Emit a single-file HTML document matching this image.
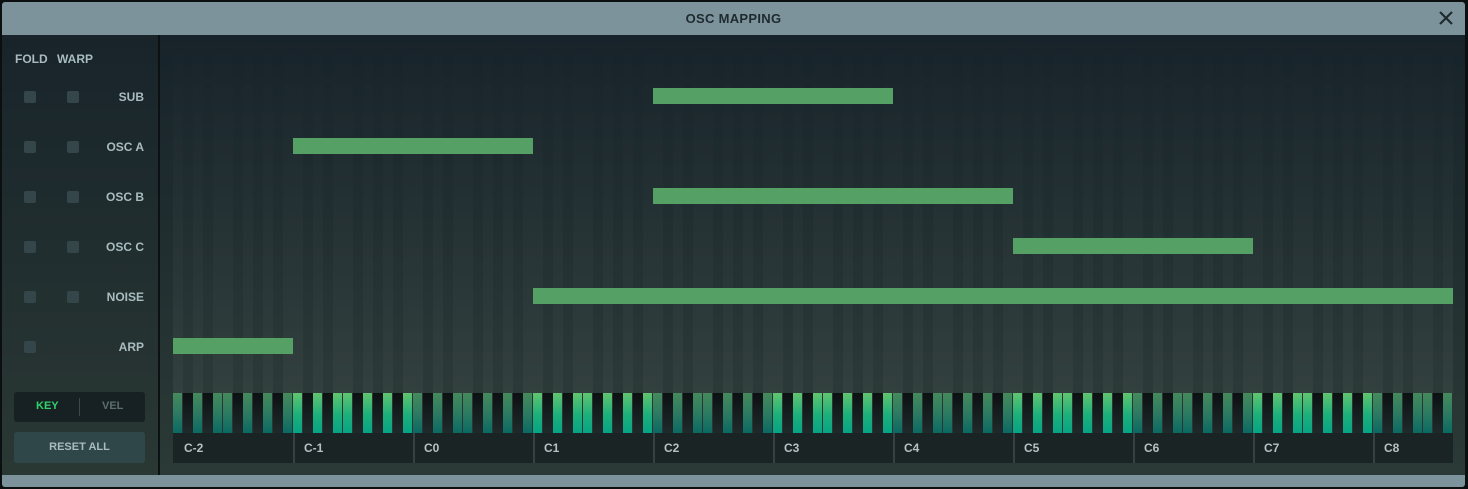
<!DOCTYPE html><html><head><style>
*{margin:0;padding:0;box-sizing:border-box}
body{width:1468px;height:489px;background:#0b0f10;font-family:"Liberation Sans",sans-serif;font-weight:bold;overflow:hidden;position:relative}
.win{position:absolute;left:2px;top:2px;width:1463px;height:485px;background:#1b272a;border-radius:3px;overflow:hidden}
.title{position:absolute;left:0;top:0;width:100%;height:33px;background:#7d939c;color:#1d2a2e;font-size:13px;text-align:center;line-height:33px;letter-spacing:.3px}
.x{position:absolute;right:10px;top:7px}
.bot{position:absolute;left:0;bottom:0;width:100%;height:12px;background:#7d939c}
.left{position:absolute;left:0;top:33px;width:156px;height:440px;background:linear-gradient(#18242a,#2a3834)}
.div{position:absolute;left:156px;top:33px;width:2px;height:440px;background:#0c1213}
.main{position:absolute;left:158px;top:33px;width:1305px;height:440px;background:linear-gradient(#17232a,#2b3a36)}
.lbl{position:absolute;color:#a9bcc0;font-size:12px}
.cb{position:absolute;width:12px;height:12px;background:#34464a;border-radius:2px}
.bar{position:absolute;height:16px;background:#55a065}
.k{position:absolute;top:358px;width:10px;height:40px}
.col{position:absolute;top:0;width:10px;height:358px}
.strip{position:absolute;left:13px;top:398px;width:1280px;height:30px;background:#1b2425}
.nl{position:absolute;top:398px;height:30px;line-height:30px;color:#b5c2c4;font-size:12px;padding-left:9px;border-left:2px solid #344244}
</style></head><body><div class="win">
<div class="title">OSC MAPPING<svg class="x" width="18" height="18" viewBox="0 0 18 18"><path d="M3 3L15 15M15 3L3 15" stroke="#1d2a2e" stroke-width="2.2"/></svg></div>
<div class="left">
<div class="lbl" style="left:13px;top:17px">FOLD</div><div class="lbl" style="left:55px;top:17px">WARP</div>
<div id="rows"></div>
<div style="position:absolute;left:12px;top:357px;width:131px;height:30px;background:#172022;border-radius:3px">
<span style="position:absolute;left:22px;top:8px;color:#2fd36b;font-size:11px">KEY</span>
<span style="position:absolute;left:65px;top:6px;width:1px;height:18px;background:#3a4a4c"></span>
<span style="position:absolute;left:88px;top:8px;color:#5c6e70;font-size:11px">VEL</span></div>
<div style="position:absolute;left:12px;top:397px;width:131px;height:31px;background:#30474a;border-radius:3px;color:#a9bcc0;font-size:11px;text-align:center;line-height:31px">RESET ALL</div>
</div>
<div class="div"></div>
<div class="main" id="m"><div class="strip"></div></div>
<div class="bot"></div>
</div>
<script>
var names=["SUB","OSC A","OSC B","OSC C","NOISE","ARP"],r=document.getElementById('rows'),h='';
names.forEach(function(n,i){var y=62+i*50;h+='<div class="cb" style="left:22px;top:'+(y-6)+'px"></div>';if(i<5)h+='<div class="cb" style="left:65px;top:'+(y-6)+'px"></div>';h+='<div class="lbl" style="right:14px;top:'+(y-7)+'px">'+n+'</div>';});
r.innerHTML=h;
var m=document.getElementById('m'),s='';var blk=[0,1,0,1,0,0,1,0,1,0,1,0];
for(var i=0;i<128;i++){var x=13+i*10,o=Math.floor(i/12),b=blk[i%12],br=o%2==1;
s+='<div class="col" style="left:'+x+'px;background:linear-gradient(rgba(255,255,255,0),rgba(255,255,255,'+(b?0.02:0.05)+'))"></div>';
var bg=b?'linear-gradient(#0c1112,#1f2a2b)':(br?'linear-gradient(#62c46f,#1cb07c 55%,#07a384)':'linear-gradient(#468a5c,#2a7a62 55%,#0a6a62)');
s+='<div class="k" style="left:'+x+'px;background:'+bg+';'+(b?'':'width:9px;')+'"></div>';}
var bars=[[653,893],[293,533],[653,1013],[1013,1253],[533,1453],[173,293]];
bars.forEach(function(b,i){s+='<div class="bar" style="left:'+(b[0]-160)+'px;top:'+(53+i*50)+'px;width:'+(b[1]-b[0])+'px"></div>';});
var nn=["C-2","C-1","C0","C1","C2","C3","C4","C5","C6","C7","C8"];
nn.forEach(function(n,i){s+='<div class="nl" style="left:'+(13+i*120)+'px;'+(i==0?'border-left-color:transparent':'')+'">'+n+'</div>';});
m.innerHTML+=s;
</script></body></html>
